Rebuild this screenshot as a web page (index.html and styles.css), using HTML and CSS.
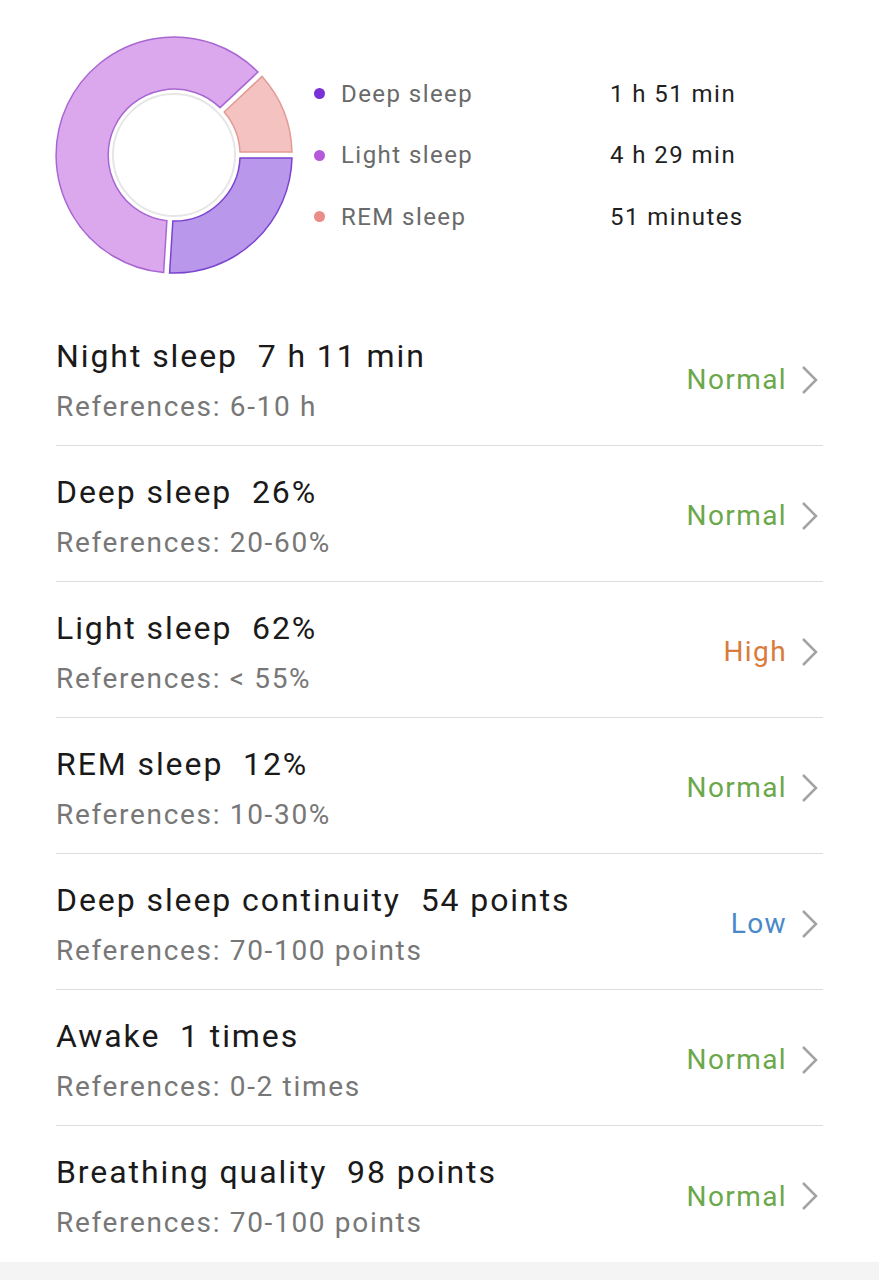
FILE: index.html
```html
<!DOCTYPE html>
<html lang="en">
<head>
    <meta charset="UTF-8">
    <title>Sleep details</title>
    <link rel="stylesheet" href="styles.css">
</head>
<body>

    <div class="chart">
        <svg class="donut" width="240" height="240" viewBox="0 0 240 240">
            <path class="seg-light" d="M109.60,237.57 A118,118 0 1 1 203.97,37.04 L166.06,72.63 A66,66 0 1 0 112.87,185.68 Z"/>
            <path class="seg-rem" d="M208.07,41.42 A118,118 0 0 1 238,117 L186,117 A66,66 0 0 0 170.16,77.01 Z"/>
            <path class="seg-deep" d="M238,123 A118,118 0 0 1 115.58,237.95 L118.85,186.06 A66,66 0 0 0 186,123 Z"/>
            <circle class="hole" cx="120" cy="120" r="61"/>
        </svg>

        <div class="legend">
            <span class="dot dot-deep"></span><span class="label">Deep sleep</span><span class="value">1 h 51 min</span>
            <span class="dot dot-light"></span><span class="label">Light sleep</span><span class="value">4 h 29 min</span>
            <span class="dot dot-rem"></span><span class="label">REM sleep</span><span class="value">51 minutes</span>
        </div>
    </div>

    <div class="list">
        <div class="row">
            <div class="info">
                <div class="title">Night sleep&nbsp; 7 h 11 min</div>
                <div class="ref">References: 6-10 h</div>
            </div>
            <div class="status normal">Normal</div>
            <svg class="chevron" width="18" height="30" viewBox="0 0 18 30"><polyline points="2,2 15,15 2,28"/></svg>
        </div>
        <div class="row">
            <div class="info">
                <div class="title">Deep sleep&nbsp; 26%</div>
                <div class="ref">References: 20-60%</div>
            </div>
            <div class="status normal">Normal</div>
            <svg class="chevron" width="18" height="30" viewBox="0 0 18 30"><polyline points="2,2 15,15 2,28"/></svg>
        </div>
        <div class="row">
            <div class="info">
                <div class="title">Light sleep&nbsp; 62%</div>
                <div class="ref">References: &lt; 55%</div>
            </div>
            <div class="status high">High</div>
            <svg class="chevron" width="18" height="30" viewBox="0 0 18 30"><polyline points="2,2 15,15 2,28"/></svg>
        </div>
        <div class="row">
            <div class="info">
                <div class="title">REM sleep&nbsp; 12%</div>
                <div class="ref">References: 10-30%</div>
            </div>
            <div class="status normal">Normal</div>
            <svg class="chevron" width="18" height="30" viewBox="0 0 18 30"><polyline points="2,2 15,15 2,28"/></svg>
        </div>
        <div class="row">
            <div class="info">
                <div class="title">Deep sleep continuity&nbsp; 54 points</div>
                <div class="ref">References: 70-100 points</div>
            </div>
            <div class="status low">Low</div>
            <svg class="chevron" width="18" height="30" viewBox="0 0 18 30"><polyline points="2,2 15,15 2,28"/></svg>
        </div>
        <div class="row">
            <div class="info">
                <div class="title">Awake&nbsp; 1 times</div>
                <div class="ref">References: 0-2 times</div>
            </div>
            <div class="status normal">Normal</div>
            <svg class="chevron" width="18" height="30" viewBox="0 0 18 30"><polyline points="2,2 15,15 2,28"/></svg>
        </div>
        <div class="row">
            <div class="info">
                <div class="title">Breathing quality&nbsp; 98 points</div>
                <div class="ref">References: 70-100 points</div>
            </div>
            <div class="status normal">Normal</div>
            <svg class="chevron" width="18" height="30" viewBox="0 0 18 30"><polyline points="2,2 15,15 2,28"/></svg>
        </div>
    </div>

    <div class="footer"></div>

</body>
</html>
```

FILE: styles.css
```css
body {
    margin: 0;
    background: #fff;
    font-family: Roboto, "Noto Sans", sans-serif;
    color: #1a1a1a;
}
.chart {
    display: flex;
    align-items: center;
    padding: 35px 0 35px 54px;
}
.donut {
    display: block;
    flex: none;
}
.seg-light {
    fill: #dba8ee;
    stroke: #a866d2;
    stroke-width: 1.5;
}
.seg-deep {
    fill: #b997ea;
    stroke: #7b44d0;
    stroke-width: 1.5;
}
.seg-rem {
    fill: #f4c3c1;
    stroke: #e29a94;
    stroke-width: 1.5;
}
.hole {
    fill: #fff;
    stroke: #e6e6e6;
    stroke-width: 2;
}
.legend {
    display: grid;
    grid-template-columns: 11px 269px auto;
    column-gap: 16px;
    row-gap: 0;
    align-items: center;
    margin: 2px 0 0 20px;
    font-size: 24px;
    letter-spacing: 0.06em;
    line-height: 61.5px;
}
.legend .value {
    margin-left: -16px;
    color: #1f1f1f;
}
.legend .label {
    color: #6a6a6a;
}
.dot {
    width: 11px;
    height: 11px;
    border-radius: 50%;
    margin-top: -2px;
}
.dot-deep { background: #7a30d8; }
.dot-light { background: #b45adb; }
.dot-rem { background: #ea8d89; }

.list {
    margin: 0 56px;
}
.row {
    display: flex;
    align-items: center;
    height: 135px;
    border-bottom: 1px solid #dedede;
}
.row:last-child {
    border-bottom: none;
    height: 136px;
}
.info {
    flex: 1;
    align-self: flex-start;
    padding-top: 26px;
}
.title {
    font-size: 32px;
    letter-spacing: 0.06em;
    line-height: 40px;
    color: #1a1a1a;
}
.ref {
    margin-top: 13px;
    font-size: 28px;
    letter-spacing: 0.06em;
    line-height: 36px;
    color: #777;
}
.status {
    font-size: 28px;
    letter-spacing: 0.05em;
    margin-top: 4px;
}
.normal { color: #6ba84a; }
.high { color: #d97b3b; }
.low { color: #4a88c9; }
.chevron {
    margin: 4px 4px 0 14px;
    fill: none;
    stroke: #a3a3a3;
    stroke-width: 2.5;
}
.footer {
    height: 40px;
    background: #f4f4f4;
}
```
